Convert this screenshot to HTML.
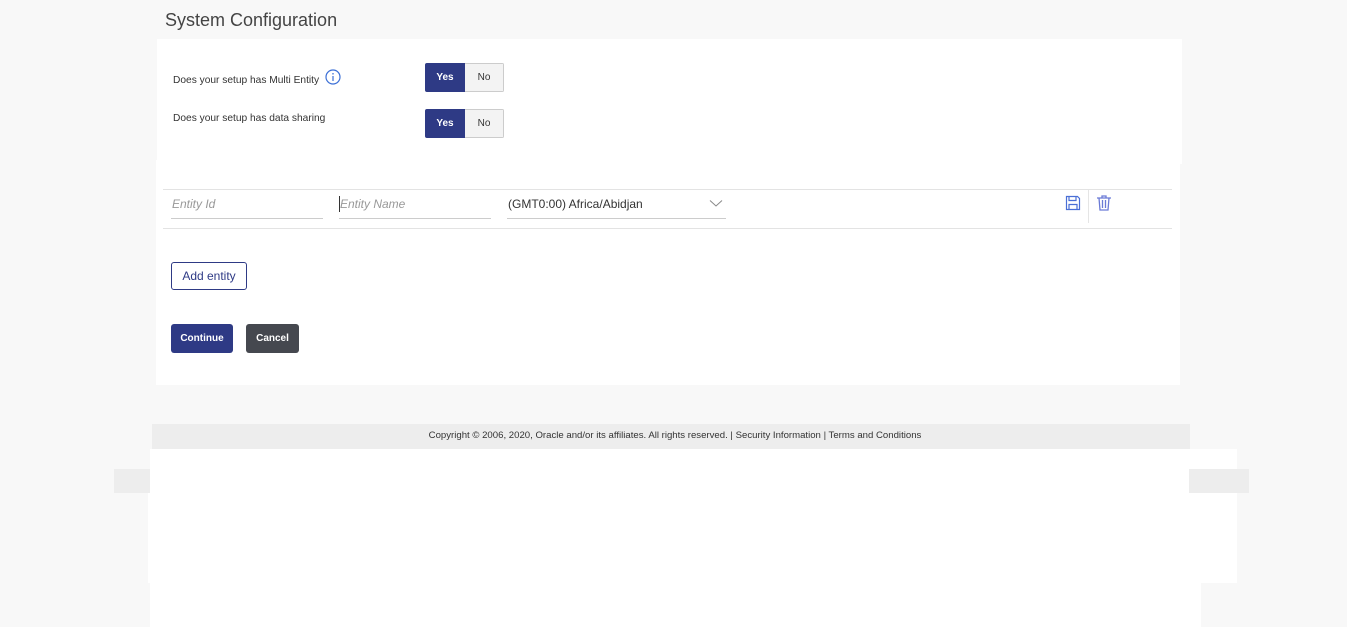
<!DOCTYPE html>
<html><head><style>
*{margin:0;padding:0;box-sizing:border-box}
body{width:1347px;height:627px;background:#f8f8f8;position:relative;overflow:hidden;font-family:"Liberation Sans",sans-serif;color:#333}
.a{position:absolute}
.tg{display:flex;border-radius:2px;overflow:hidden;width:79px;height:29px}
.tg div{width:40px;display:flex;align-items:center;justify-content:center;font-size:10px}
.y{background:#2e3a85;color:#fff;font-weight:bold}
.n{background:#f3f3f3;border:1px solid #ccc;border-left:none;color:#333;width:39px!important}
.lbl{font-size:10.2px;color:#333}
.in{border-bottom:1px solid #ccc;font-size:12px;font-style:italic;color:#999;height:30px;line-height:30px;padding-left:1px}
</style></head><body>
<div class="a" style="left:165px;top:10px;font-size:18px;color:#444">System Configuration</div>
<div class="a" style="left:157px;top:39px;width:1025px;height:125px;background:#fff"></div>
<div class="a" style="left:156px;top:160px;width:1024px;height:225px;background:#fff"></div>
<div class="a lbl" style="left:173px;top:75px">Does your setup has Multi Entity</div>
<svg class="a" style="left:325px;top:69px" width="16" height="16" viewBox="0 0 16 16"><circle cx="8" cy="8" r="7" fill="none" stroke="#3b6fd6" stroke-width="1.2"/><rect x="7.4" y="7" width="1.2" height="5" fill="#3b6fd6"/><circle cx="8" cy="4.8" r=".8" fill="#3b6fd6"/></svg>
<div class="a tg" style="left:425px;top:63px"><div class="y">Yes</div><div class="n">No</div></div>
<div class="a lbl" style="left:173px;top:113px">Does your setup has data sharing</div>
<div class="a tg" style="left:425px;top:109px"><div class="y">Yes</div><div class="n">No</div></div>
<div class="a" style="left:163px;top:189px;width:1009px;border-top:1px solid #e3e3e3"></div>
<div class="a" style="left:163px;top:228px;width:1009px;border-top:1px solid #e3e3e3"></div>
<div class="a in" style="left:171px;top:189px;width:152px">Entity Id</div>
<div class="a in" style="left:339px;top:189px;width:152px">Entity Name</div>
<div class="a" style="left:339px;top:196px;width:1px;height:16px;background:#333"></div>
<div class="a in" style="left:507px;top:189px;width:219px;font-style:normal;color:#333">(GMT0:00) Africa/Abidjan</div>
<svg class="a" style="left:709px;top:199px" width="14" height="9" viewBox="0 0 14 9"><path d="M1 1.5l6 5.5 6-5.5" fill="none" stroke="#888" stroke-width="1"/></svg>
<svg class="a" style="left:1065px;top:195px" width="16" height="16" viewBox="0 0 16 16"><path d="M1.5 1.5h11l2 2v11h-13z M4 1.5v4h7v-4 M4 14.5v-5h8v5" fill="none" stroke="#4a6fd6" stroke-width="1.2"/></svg>
<div class="a" style="left:1088px;top:190px;height:33px;border-left:1px solid #e5e5e5"></div>
<svg class="a" style="left:1096px;top:195px" width="16" height="16" viewBox="0 0 16 16"><path d="M1 3h14 M6 3V1h4v2 M3 3l1 12h8l1-12 M6.5 5v8 M9.5 5v8" fill="none" stroke="#6a7ad6" stroke-width="1.3"/></svg>
<div class="a" style="left:171px;top:262px;width:76px;height:28px;border:1px solid #2e3a85;border-radius:3px;font-size:12px;color:#2e3a85;display:flex;align-items:center;justify-content:center">Add entity</div>
<div class="a" style="left:171px;top:324px;width:62px;height:29px;background:#2e3a85;border-radius:3px;color:#fff;font-size:10px;font-weight:bold;display:flex;align-items:center;justify-content:center">Continue</div>
<div class="a" style="left:246px;top:324px;width:53px;height:29px;background:#45484f;border-radius:3px;color:#fff;font-size:10px;font-weight:bold;display:flex;align-items:center;justify-content:center">Cancel</div>
<div class="a" style="left:152px;top:424px;width:1038px;height:25px;background:#ededed;font-size:9.6px;color:#333;text-align:center;line-height:24px;padding-left:8px">Copyright © 2006, 2020, Oracle and/or its affiliates. All rights reserved. | Security Information | Terms and Conditions</div>
<div class="a" style="left:150px;top:449px;width:1040px;height:178px;background:#fff"></div>
<div class="a" style="left:1190px;top:449px;width:47px;height:134px;background:#fff"></div>
<div class="a" style="left:1190px;top:583px;width:11px;height:44px;background:#fff"></div>
<div class="a" style="left:114px;top:469px;width:36px;height:24px;background:#ededed"></div>
<div class="a" style="left:1189px;top:469px;width:60px;height:24px;background:#ededed"></div>
<div class="a" style="left:148px;top:493px;width:2px;height:90px;background:#fff"></div>
</body></html>
